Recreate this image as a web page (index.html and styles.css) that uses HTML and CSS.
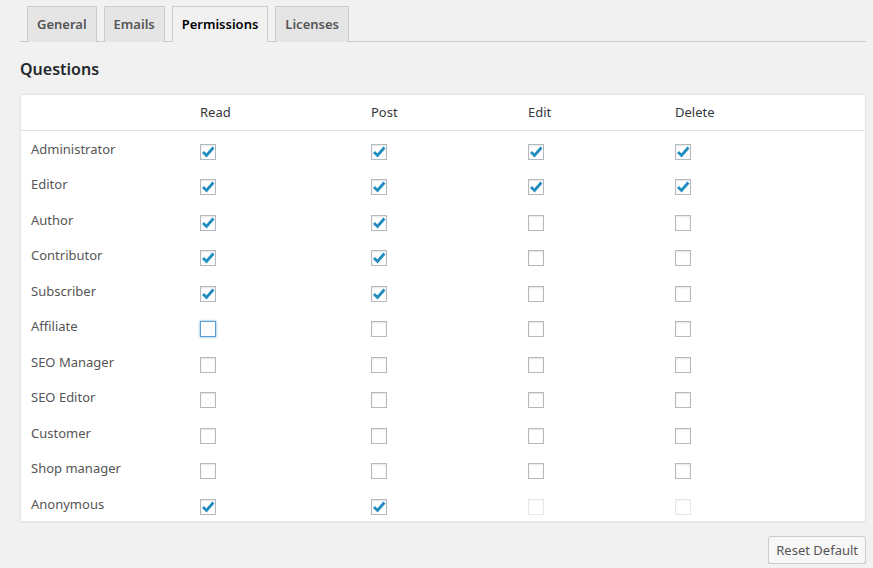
FILE: index.html
```html
<!DOCTYPE html>
<html lang="en">
<head>
<meta charset="utf-8">
<title>Permissions</title>
<link rel="stylesheet" href="styles.css">
</head>
<body>
<div class="wrap">
  <nav class="tabs">
    <a class="tab">General</a>
    <a class="tab">Emails</a>
    <a class="tab active">Permissions</a>
    <a class="tab">Licenses</a>
  </nav>
  <h2 class="title">Questions</h2>
  <table class="perm">
    <colgroup><col class="c-name"><col class="c-read"><col class="c-post"><col class="c-edit"><col></colgroup>
    <thead>
      <tr><th></th><th>Read</th><th>Post</th><th>Edit</th><th>Delete</th></tr>
    </thead>
    <tbody>
      <tr><td>Administrator</td>
        <td><span class="cb on"><svg viewBox="0 0 16 16"><path d="M3 7.9 L6.5 11.4 L13.4 3.5"/></svg></span></td>
        <td><span class="cb on"><svg viewBox="0 0 16 16"><path d="M3 7.9 L6.5 11.4 L13.4 3.5"/></svg></span></td>
        <td><span class="cb on"><svg viewBox="0 0 16 16"><path d="M3 7.9 L6.5 11.4 L13.4 3.5"/></svg></span></td>
        <td><span class="cb on"><svg viewBox="0 0 16 16"><path d="M3 7.9 L6.5 11.4 L13.4 3.5"/></svg></span></td></tr>
      <tr><td>Editor</td>
        <td><span class="cb on"><svg viewBox="0 0 16 16"><path d="M3 7.9 L6.5 11.4 L13.4 3.5"/></svg></span></td>
        <td><span class="cb on"><svg viewBox="0 0 16 16"><path d="M3 7.9 L6.5 11.4 L13.4 3.5"/></svg></span></td>
        <td><span class="cb on"><svg viewBox="0 0 16 16"><path d="M3 7.9 L6.5 11.4 L13.4 3.5"/></svg></span></td>
        <td><span class="cb on"><svg viewBox="0 0 16 16"><path d="M3 7.9 L6.5 11.4 L13.4 3.5"/></svg></span></td></tr>
      <tr><td>Author</td>
        <td><span class="cb on"><svg viewBox="0 0 16 16"><path d="M3 7.9 L6.5 11.4 L13.4 3.5"/></svg></span></td>
        <td><span class="cb on"><svg viewBox="0 0 16 16"><path d="M3 7.9 L6.5 11.4 L13.4 3.5"/></svg></span></td>
        <td><span class="cb"></span></td>
        <td><span class="cb"></span></td></tr>
      <tr><td>Contributor</td>
        <td><span class="cb on"><svg viewBox="0 0 16 16"><path d="M3 7.9 L6.5 11.4 L13.4 3.5"/></svg></span></td>
        <td><span class="cb on"><svg viewBox="0 0 16 16"><path d="M3 7.9 L6.5 11.4 L13.4 3.5"/></svg></span></td>
        <td><span class="cb"></span></td>
        <td><span class="cb"></span></td></tr>
      <tr><td>Subscriber</td>
        <td><span class="cb on"><svg viewBox="0 0 16 16"><path d="M3 7.9 L6.5 11.4 L13.4 3.5"/></svg></span></td>
        <td><span class="cb on"><svg viewBox="0 0 16 16"><path d="M3 7.9 L6.5 11.4 L13.4 3.5"/></svg></span></td>
        <td><span class="cb"></span></td>
        <td><span class="cb"></span></td></tr>
      <tr><td>Affiliate</td>
        <td><span class="cb focus"></span></td>
        <td><span class="cb"></span></td>
        <td><span class="cb"></span></td>
        <td><span class="cb"></span></td></tr>
      <tr><td>SEO Manager</td>
        <td><span class="cb"></span></td>
        <td><span class="cb"></span></td>
        <td><span class="cb"></span></td>
        <td><span class="cb"></span></td></tr>
      <tr><td>SEO Editor</td>
        <td><span class="cb"></span></td>
        <td><span class="cb"></span></td>
        <td><span class="cb"></span></td>
        <td><span class="cb"></span></td></tr>
      <tr><td>Customer</td>
        <td><span class="cb"></span></td>
        <td><span class="cb"></span></td>
        <td><span class="cb"></span></td>
        <td><span class="cb"></span></td></tr>
      <tr><td>Shop manager</td>
        <td><span class="cb"></span></td>
        <td><span class="cb"></span></td>
        <td><span class="cb"></span></td>
        <td><span class="cb"></span></td></tr>
      <tr><td>Anonymous</td>
        <td><span class="cb on"><svg viewBox="0 0 16 16"><path d="M3 7.9 L6.5 11.4 L13.4 3.5"/></svg></span></td>
        <td><span class="cb on"><svg viewBox="0 0 16 16"><path d="M3 7.9 L6.5 11.4 L13.4 3.5"/></svg></span></td>
        <td><span class="cb disabled"></span></td>
        <td><span class="cb disabled"></span></td></tr>
    </tbody>
  </table>
  <div class="actions">
    <button class="button" type="button">Reset Default</button>
  </div>
</div>
</body>
</html>
```
FILE: styles.css
```css
html, body {
  margin: 0;
  padding: 0;
  background: #f1f1f1;
}
body {
  font-family: "Noto Sans", "Open Sans", sans-serif;
  font-size: 13px;
  line-height: 1.4;
  color: #444;
}
.wrap {
  width: 846px;
  margin: 0 0 0 20px;
  padding-top: 6px;
}
.tabs {
  display: flex;
  border-bottom: 1px solid #ccc;
}
.tab {
  display: block;
  margin-left: 7px;
  margin-bottom: -1px;
  padding: 5px 9px;
  border: 1px solid #ccc;
  border-bottom: none;
  background: #e5e5e5;
  color: #555;
  font-size: 13px;
  font-weight: 600;
  line-height: 24px;
  text-decoration: none;
}
.tab.active {
  background: #f1f1f1;
  color: #000;
  border-bottom: 1px solid #f1f1f1;
}
.title {
  margin: 16px 0 0;
  font-size: 16px;
  line-height: 23px;
  font-weight: 600;
  color: #23282d;
}
.perm {
  margin-top: 13px;
  width: 846px;
  table-layout: fixed;
  border-collapse: separate;
  border-spacing: 0;
  background: #fff;
  border: 1px solid #e5e5e5;
  box-shadow: 0 1px 1px rgba(0,0,0,.04);
}
.c-name { width: 169px; }
.c-read { width: 171px; }
.c-post { width: 157px; }
.c-edit { width: 147px; }
.perm th, .perm td {
  padding: 9px 10px 7px;
  text-align: left;
  vertical-align: top;
  font-size: 13px;
  line-height: 19.5px;
}
.perm th {
  font-weight: 400;
  color: #32373c;
  border-bottom: 1px solid #e1e1e1;
  padding-top: 8px;
  padding-bottom: 7px;
}
.perm td {
  color: #555;
}
.cb {
  display: inline-block;
  box-sizing: border-box;
  width: 16px;
  height: 16px;
  margin: 4px 0 -1px;
  vertical-align: top;
  border: 1px solid #b4b9be;
  background: #fff;
  box-shadow: inset 0 1px 2px rgba(0,0,0,.1);
}
.cb svg {
  display: block;
  width: 16px;
  height: 16px;
  margin: -1px;
  fill: none;
  stroke: #1e8cbe;
  stroke-width: 2.8;
}
.cb.focus {
  border-color: #5b9dd9;
  box-shadow: 0 0 2px rgba(30,140,190,.8);
}
.cb.disabled {
  border-color: rgba(222,222,222,.75);
  box-shadow: inset 0 1px 2px rgba(0,0,0,.04);
}
.actions {
  display: flex;
  justify-content: flex-end;
  margin-top: 14px;
}
.button {
  height: 28px;
  box-sizing: border-box;
  padding: 0 7px 1px;
  font-family: inherit;
  font-size: 13px;
  line-height: 26px;
  color: #555;
  background: #f7f7f7;
  border: 1px solid #ccc;
  border-radius: 3px;
  box-shadow: 0 1px 0 #ccc;
}
```
